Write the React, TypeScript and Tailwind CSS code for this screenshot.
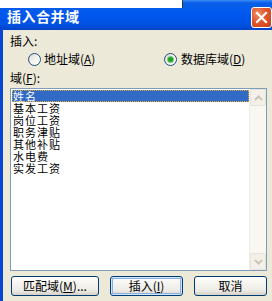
import React from 'react';

const fields = ['姓名', '基本工资', '岗位工资', '职务津贴', '其他补贴', '水电费', '实发工资'];

const CloseButton: React.FC = () => (
  <div className="self-end mb-[2px] w-[21px] h-[21px] rounded-[3px] border border-white bg-[radial-gradient(circle_at_30%_30%,#F08E6A_0%,#E0552B_45%,#C8401A_100%)] flex items-center justify-center">
    <svg width="13" height="13" viewBox="0 0 13 13">
      <path d="M2 2 L11 11 M11 2 L2 11" stroke="white" strokeWidth="2.2" strokeLinecap="square" />
    </svg>
  </div>
);

const Radio: React.FC<{ checked?: boolean }> = ({ checked }) => (
  <span className="w-[13px] h-[13px] rounded-full border border-[#1C5180] bg-[linear-gradient(135deg,#DCD9CF_0%,#F4F3EE_50%,#FFFFFF_100%)] flex items-center justify-center shrink-0">
    {checked && <span className="w-[5px] h-[5px] rounded-full bg-[#21A121] shadow-[0_0_0_1px_#7ACB7A]" />}
  </span>
);

const XpButton: React.FC<{ w: string; def?: boolean; children: React.ReactNode }> = ({ w, def, children }) => (
  <div
    className={`${w} h-[20px] rounded-[3px] border border-[#003C74] bg-[linear-gradient(#FFFFFF_0%,#F4F3EE_40%,#ECEBE6_75%,#D6D0C5_100%)] flex items-center justify-center leading-[14px] ${
      def ? 'shadow-[inset_0_0_0_1px_#CEE7FF,inset_0_0_0_2px_#89ADE4]' : ''
    }`}
  >
    {children}
  </div>
);

export default function App() {
  return (
    <div className="relative w-[272px] h-[301px] overflow-hidden bg-[#ECE9D8] font-['Noto_Sans_CJK_SC','Liberation_Sans',sans-serif] text-[12px] text-black">
      {/* title bar */}
      <div className="h-[30px] flex justify-between pl-[7px] bg-[linear-gradient(#3B8CF5_0px,#0A5EE8_3px,#0058EE_14px,#0053E4_24px,#0043C9_30px)]">
        <span className="self-center text-white font-bold text-[14px] leading-[16px] tracking-[0.5px] pt-[1px]">插入合并域</span>
        <CloseButton />
      </div>
      <div className="absolute left-0 top-0 w-[183px] h-[8px] bg-white border-r border-[#333333]" />

      {/* body */}
      <div className="flex flex-col h-[271px] border-l-[3px] border-[#0A46D6] pl-[7px] pr-[5px] pt-[4px]">
        <div className="h-[14px] leading-[14px]">插入:</div>
        <div className="mt-[4px] h-[14px] flex items-center pl-[18px] leading-[14px]">
          <div className="w-[136px] flex items-center gap-[3px]">
            <Radio />
            <span>地址域(<u>A</u>)</span>
          </div>
          <div className="flex items-center gap-[4px]">
            <Radio checked />
            <span>数据库域(<u>D</u>)</span>
          </div>
        </div>
        <div className="mt-[5px] h-[14px] leading-[14px]">域(<u>F</u>):</div>

        {/* list box */}
        <div className="mt-[3px] h-[183px] border border-[#7F9DB9] bg-white flex">
          <div className="flex-1 pt-[1px] pl-[1px]">
            {fields.map((f, i) => (
              <div
                key={f}
                className={`h-[12px] leading-[12px] text-[11px] tracking-[1px] pl-[1px] ${
                  i === 0 ? 'bg-[#316AC5] text-white outline-1 outline-dotted outline-[#E7A63A] -outline-offset-1' : ''
                }`}
              >
                {f}
              </div>
            ))}
          </div>
          <div className="w-[17px] bg-[#F8F7F2] border-l border-[#EEEDE6] flex flex-col justify-between">
            <div className="h-[17px] rounded-[2px] border border-[#E6E4DA] bg-[#F2F0E8] flex items-center justify-center">
              <svg width="9" height="6" viewBox="0 0 9 6">
                <path d="M1 5 L4.5 1.5 L8 5" stroke="#C8C6B9" strokeWidth="2" fill="none" />
              </svg>
            </div>
            <div className="h-[17px] rounded-[2px] border border-[#E6E4DA] bg-[#F2F0E8] flex items-center justify-center">
              <svg width="9" height="6" viewBox="0 0 9 6">
                <path d="M1 1 L4.5 4.5 L8 1" stroke="#C8C6B9" strokeWidth="2" fill="none" />
              </svg>
            </div>
          </div>
        </div>

        {/* buttons */}
        <div className="mt-[5px] pl-[1px] flex gap-[11px]">
          <XpButton w="w-[88px]">匹配域(<u>M</u>)...</XpButton>
          <XpButton w="w-[73px]" def>
            插入(<u>I</u>)
          </XpButton>
          <XpButton w="w-[73px]">取消</XpButton>
        </div>
      </div>
    </div>
  );
}
